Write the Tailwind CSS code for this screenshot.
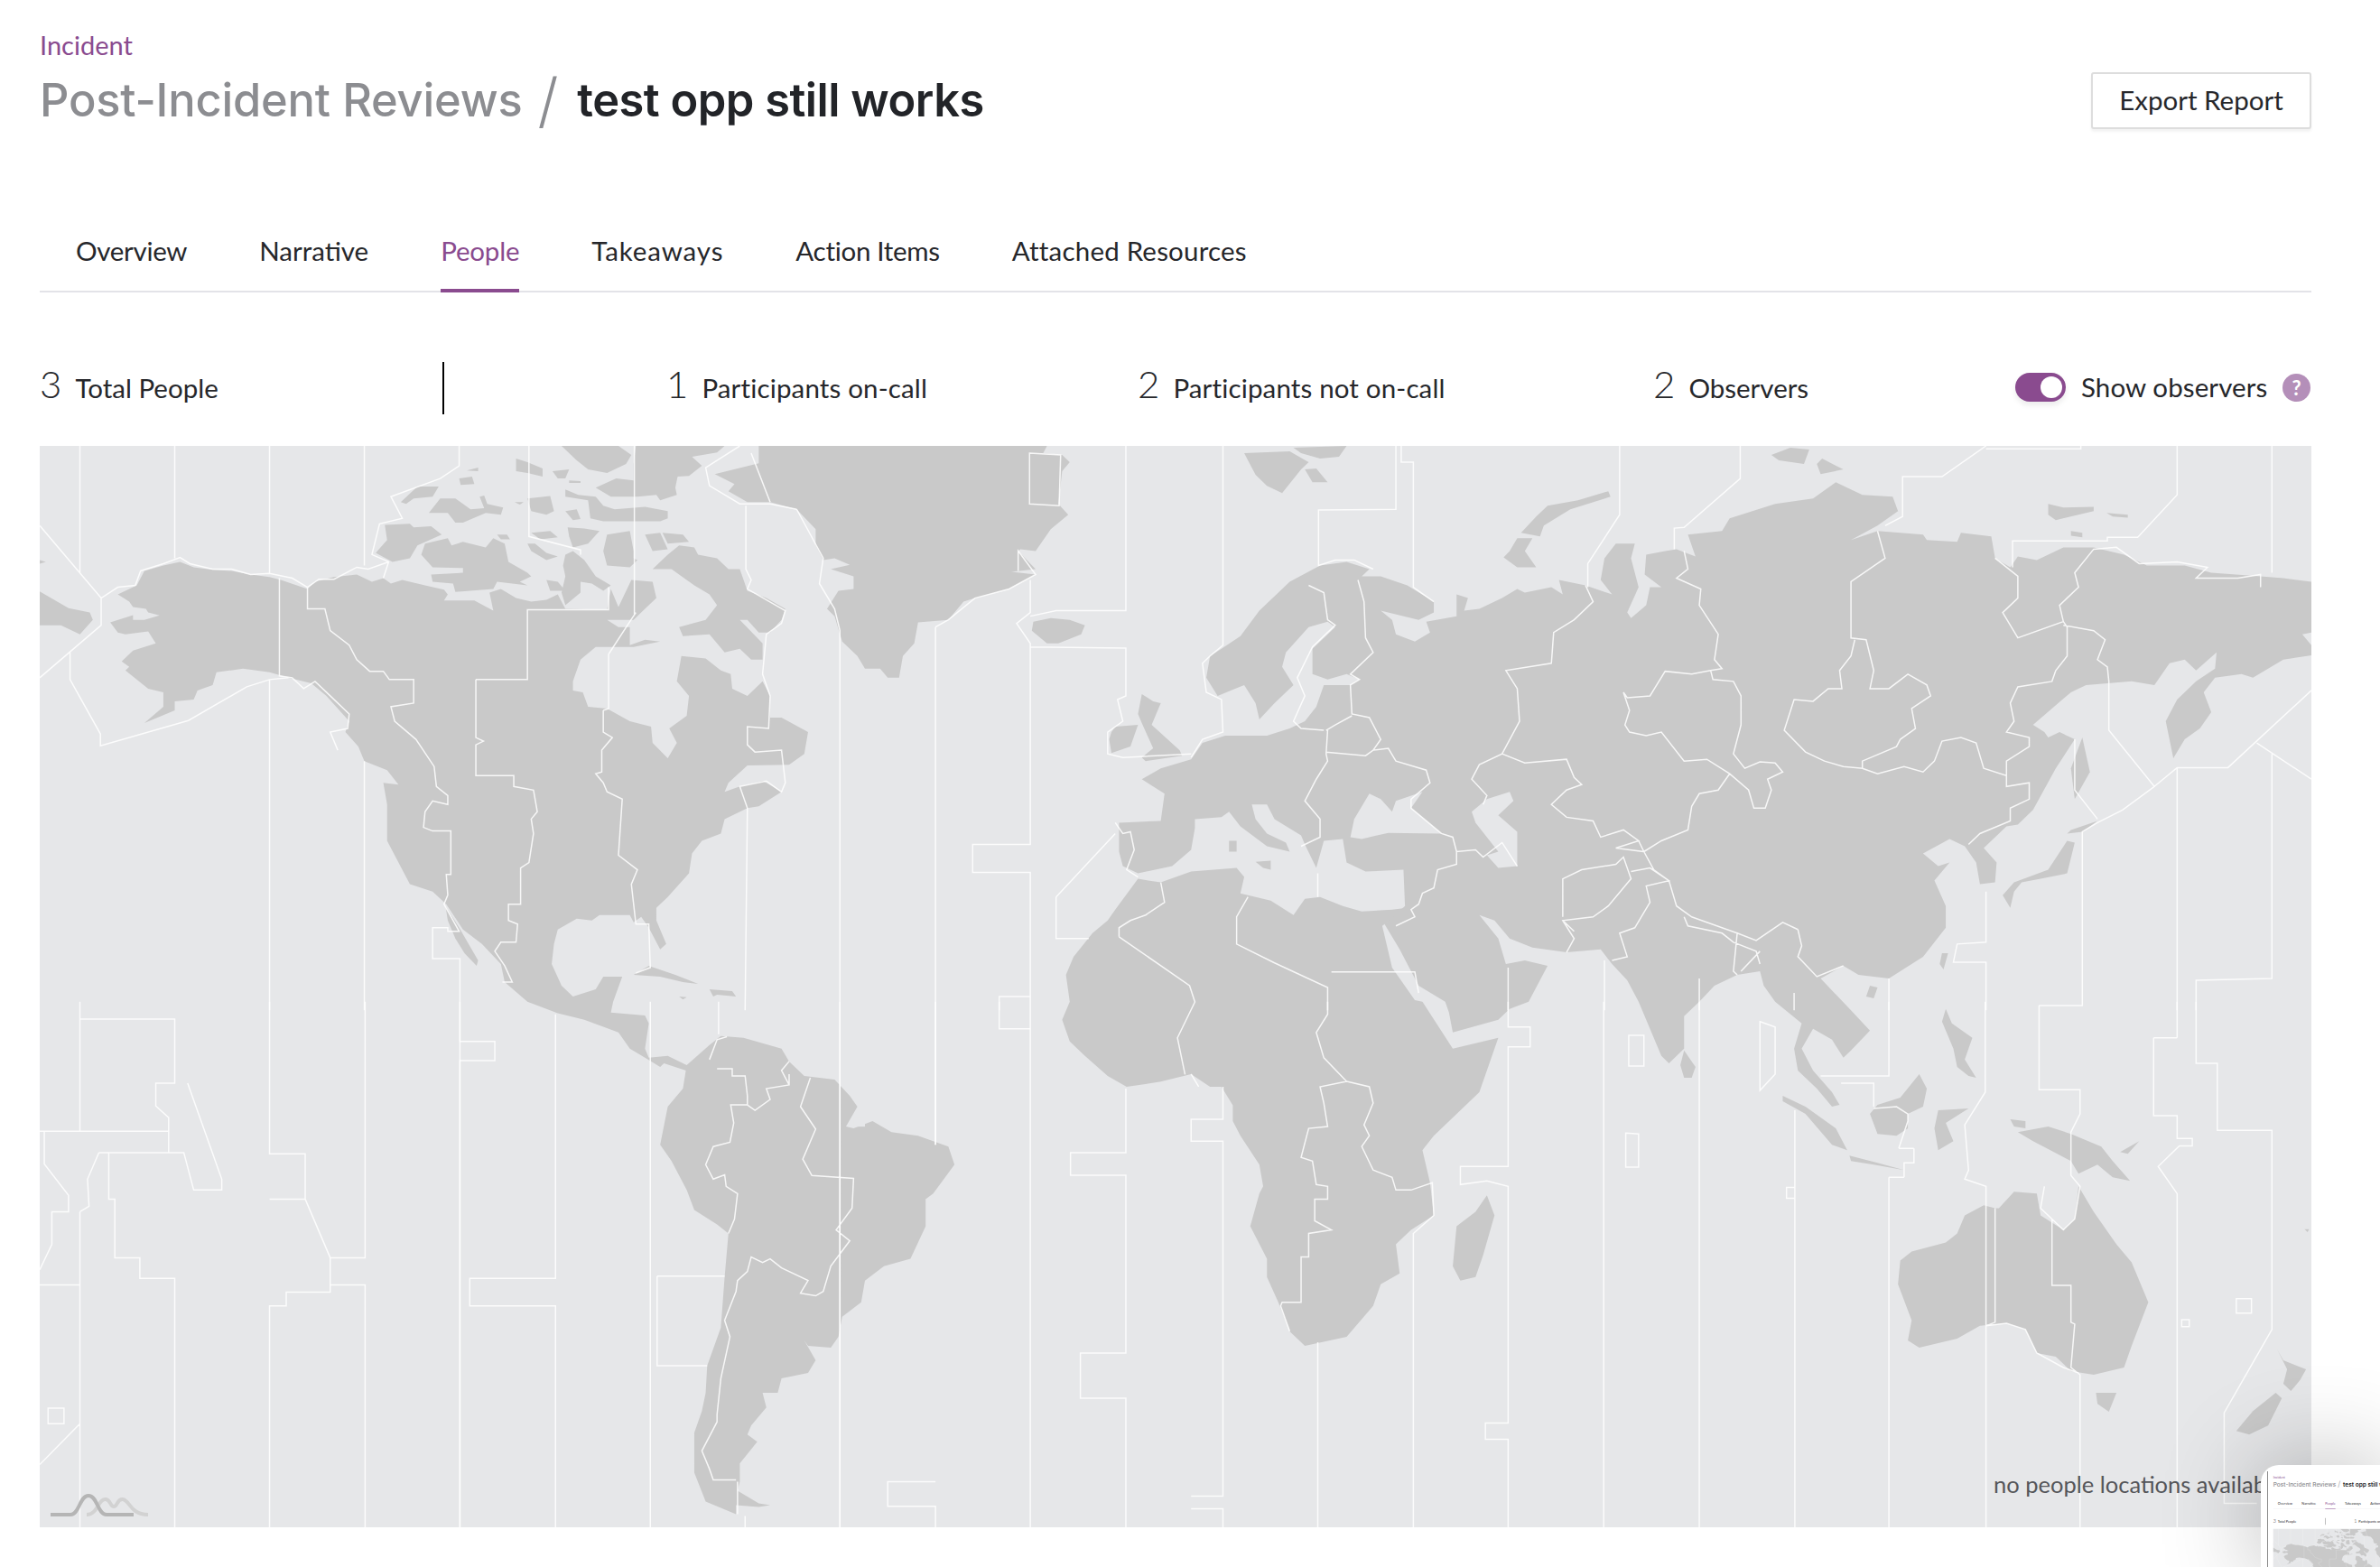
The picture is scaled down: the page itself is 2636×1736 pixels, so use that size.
<!DOCTYPE html>
<html lang="en">
<head>
    <meta charset="UTF-8">
    <script src="https://cdn.jsdelivr.net/npm/@tailwindcss/browser@4"></script>
    <title>Post-Incident Review</title>
</head>
<body class="bg-white overflow-hidden h-[1736px] relative font-['Lato',sans-serif] text-[#26272b]">
    <main class="pl-[44px] pr-[76px] w-[2636px]">
        <!-- header -->
        <header class="flex justify-between items-start h-[261px]">
            <div class="pt-[33px]">
                <div class="text-[29px] leading-[34px] text-[#8a4b8f]">Incident</div>
                <h1 class="flex items-center h-[78px] mt-[5px] text-[50.6px] font-['Inter',sans-serif] tracking-[-0.2px]">
                    <span class="text-[#8c8d91] font-medium">Post-Incident Reviews</span>
                    <span class="text-[#8c8d91] font-light text-[66px] ml-[17px] mr-[21px]">/</span>
                    <span class="font-semibold text-[#222428] tracking-[-0.5px]">test opp still works</span>
                </h1>
            </div>
            <button class="mt-[80px] w-[244px] h-[63px] bg-white border-2 border-[#dddddd] rounded-[3px] shadow-[0_3px_3px_rgba(0,0,0,.05)] text-[29.5px]">Export Report</button>
        </header>
        <!-- tabs -->
        <nav class="flex h-[63px] border-b-2 border-[#e3e3e8] text-[29.5px] leading-[34px]">
            <a class="ml-[40px] mr-[80px] tracking-[-0.3px]">Overview</a>
            <a class="mr-[80px]">Narrative</a>
            <a class="mr-[80px] h-[63px] w-[87px] text-[#8a4b8f] border-b-4 border-[#8a4b8f] tracking-[-0.2px]">People</a>
            <a class="mr-[80px] tracking-[0.9px]">Takeaways</a>
            <a class="mr-[80px] tracking-[-0.3px]">Action Items</a>
            <a class="tracking-[0.2px]">Attached Resources</a>
        </nav>
        <!-- stats -->
        <section class="flex items-center h-[170px] pt-[38px] text-[29.5px] whitespace-nowrap">
            <div class="w-[446px] flex items-baseline gap-[15px]"><span class="text-[42px] font-light leading-none">3</span>Total People</div>
            <div class="w-[2px] h-[58px] mt-[4px] bg-black"></div>
            <div class="w-[768px] pl-[246px] flex items-baseline gap-[15px]"><span class="text-[42px] font-light leading-none">1</span><span class="tracking-[0.15px]">Participants on-call</span></div>
            <div class="w-[571px] flex items-baseline gap-[15px]"><span class="text-[42px] font-light leading-none">2</span><span class="tracking-[0.15px]">Participants not on-call</span></div>
            <div class="w-[401px] flex items-baseline gap-[15px]"><span class="text-[42px] font-light leading-none">2</span>Observers</div>
            <div class="flex items-center mt-[2px]">
                <div class="w-[56px] h-[32px] rounded-full bg-[#8a4b8f] flex items-center justify-end pr-[4px] shadow-[0_4px_6px_rgba(0,0,0,.08)]">
                    <div class="w-[24px] h-[24px] rounded-full bg-white"></div>
                </div>
                <span class="ml-[17px] w-[223px] tracking-[0.1px]">Show observers</span>
                <span class="w-[31px] h-[31px] rounded-full bg-[#b48fb9] text-white text-[22px] font-bold flex items-center justify-center">?</span>
            </div>
        </section>
        <!-- map -->
        <section class="relative h-[1198px] bg-[#e6e7e9] overflow-hidden">
            <svg class="block w-full h-full" viewBox="52 10 2995 2985" preserveAspectRatio="none">
                <defs>
                    <g id="world">
                        <g fill="#c9c9c9">
                            <!-- north america -->
                            <path d="M180 395L190 355 215 340 237 330 255 345 280 352 305 355 330 365 355 372 370 380 405 405 415 385 440 372 470 365 490 385 505 375 515 390 530 380 560 395 585 407 590 420 585 437 625 437 650 465 645 415 660 405 680 430 700 440 720 435 735 420 745 460 800 462 805 405 815 455 832 380 860 385 865 430 845 470 835 490 800 490 815 510 830 510 830 560 850 545 870 550 835 565 785 565 765 600 755 660 755 685 768 690 775 730 800 735 830 770 858 785 860 830 880 872 892 830 882 790 905 755 908 700 892 660 898 590 930 597 950 630 963 640 965 680 985 700 1005 660 1015 700 1015 760 1030 760 1065 800 1060 860 1040 890 985 892 960 940 955 965 975 950 1005 935 1010 940 1030 965 1000 1005 985 1010 955 1040 950 1080 925 1100 912 1135 908 1190 880 1255 865 1285 865 1320 878 1385 870 1400 855 1340 845 1310 835 1325 830 1305 790 1305 780 1320 760 1315 735 1345 730 1385 727 1440 740 1500 755 1530 785 1510 795 1475 820 1475 808 1544 805 1574 850 1582 855 1604 850 1674 855 1699 880 1694 905 1719 925 1725 905 1735 875 1714 870 1724 850 1699 830 1674 815 1629 770 1594 735 1576 695 1544 665 1490 660 1440 635 1385 610 1345 588 1275 570 1240 540 1220 525 1160 510 1100 510 1000 505 940 525 945 510 905 480 880 472 840 455 800 460 770 430 700 410 665 380 650 355 635 320 625 285 635 280 670 260 685 255 710 230 715 230 740 190 775 215 730 215 690 195 680 165 630 170 620 160 605 175 575 205 555 195 522 165 530 155 525 145 497 175 477 175 490 190 490 210 478 195 470 192 460 175 455 170 440 155 420Z"/>
                            <path d="M587 1280L605 1340 630 1430 628 1445 612 1410 600 1370 590 1320Z"/>
                            <!-- arctic islands -->
                            <path d="M507 228L540 225 545 235 568 232 582 255 550 285 540 320 517 330 495 305 510 270Z"/>
                            <path d="M560 280L590 265 595 285 610 275 640 290 650 265 665 280 670 330 695 360 700 370 685 385 695 395 655 385 650 405 600 413 597 390 570 385 568 365 610 360 610 347 570 345 555 310Z"/>
                            <path d="M695 280L705 280 720 305 735 315 720 325 700 300Z"/>
                            <path d="M748 235L770 238 790 245 775 280 755 290 750 260Z"/>
                            <path d="M700 250L725 245 735 262 712 268Z"/>
                            <path d="M655 255L668 255 672 268 660 268Z"/>
                            <path d="M720 380L735 385 745 410 725 410Z"/>
                            <path d="M745 310L755 300 770 325 785 370 805 395 795 410 780 390 765 385 765 415 745 450 740 415 745 370 742 340Z"/>
                            <path d="M800 255L830 245 835 300 835 320 840 325 830 345 800 340 795 300Z"/>
                            <path d="M850 255L870 250 880 295 860 300Z"/>
                            <path d="M873 250L900 255 908 275 880 280Z"/>
                            <path d="M895 285L915 290 920 310 945 320 960 350 975 350 985 410 1010 430 1035 460 1030 490 1015 525 1000 525 985 490 975 490 1005 555 1005 600 990 600 975 570 955 580 935 530 900 535 895 510 930 490 945 450 935 420 915 395 885 350 860 350 880 310Z"/>
                            <path d="M740 10L815 10 832 35 825 60 800 85 775 75 760 50Z"/>
                            <path d="M838 10L955 10 945 28 912 40 925 65 908 93 893 95 890 125 892 145 870 160 865 145 840 150 805 150 785 125 812 100 835 105 835 60Z"/>
                            <path d="M680 45L695 55 715 72 715 95 695 85 680 80Z"/>
                            <path d="M728 80L750 75 745 100 735 100Z"/>
                            <path d="M750 105L765 107 765 112 750 112Z"/>
                            <path d="M745 130L762 145 785 150 795 175 810 185 850 178 880 190 880 210 870 218 795 218 778 210 775 160 745 150Z"/>
                            <path d="M605 100L622 95 625 115 607 118Z"/>
                            <path d="M615 78L630 70 630 80Z"/>
                            <path d="M550 122L578 122 570 150 545 155 535 170 528 165Z"/>
                            <path d="M580 155L600 155 620 185 638 182 632 150 638 147 642 170 663 180 660 200 640 195 610 222 600 222 590 195 565 195Z"/>
                            <path d="M695 155L725 148 730 190 720 200 700 190Z"/>
                            <path d="M745 190L760 185 765 212 755 215Z"/>
                            <path d="M678 165L690 165 685 172Z"/>
                            <path d="M52 325L60 330 52 335Z"/>
                            <path d="M52 412L90 458 118 470 122 490 105 530 80 505 52 505Z"/>
                            <!-- greenland, iceland, uk -->
                            <path d="M1000 10L1380 10 1375 30 1400 35 1410 55 1400 80 1395 170 1408 200 1385 240 1365 300 1345 295 1342 300 1365 350 1330 358 1310 352 1365 365 1330 405 1285 430 1270 440 1250 490 1210 497 1205 555 1190 590 1185 650 1170 650 1160 625 1140 625 1130 590 1110 550 1100 480 1090 460 1105 410 1125 405 1125 370 1095 350 1120 338 1100 320 1085 325 1075 285 1075 240 1050 185 1015 165 985 165 960 135 968 115 942 88 1000 58Z"/>
                            <path d="M1362 495L1385 485 1410 490 1430 505 1425 530 1395 555 1380 555 1360 520Z"/>
                            <path d="M1505 695L1520 715 1530 720 1518 780 1555 850 1558 865 1510 880 1505 870 1520 845 1505 775 1500 750Z"/>
                            <path d="M1470 785L1500 780 1490 840 1465 858 1462 820 1465 800Z"/>
                            <!-- cuba etc -->
                            <path d="M835 1470L855 1445 890 1470 920 1495 900 1490 870 1475Z"/>
                            <path d="M935 1510L965 1515 970 1530 945 1525 940 1530Z"/>
                            <path d="M895 1530L905 1532 900 1538Z"/>
                            <!-- africa -->
                            <path d="M1500 1205L1530 1215 1570 1185 1630 1175 1640 1200 1635 1245 1675 1265 1705 1305 1720 1260 1740 1255 1770 1280 1795 1295 1835 1290 1855 1285 1822 1335 1835 1450 1865 1540 1875 1544 1915 1674 1975 1644 1950 1794 1890 1914 1875 1954 1885 2044 1890 2134 1860 2174 1840 2214 1845 2294 1820 2324 1810 2384 1775 2469 1720 2494 1700 2454 1685 2374 1670 2304 1670 2254 1648 2164 1660 2074 1665 2054 1660 1994 1635 1914 1625 1874 1625 1830 1610 1779 1595 1779 1570 1744 1530 1765 1485 1779 1460 1749 1430 1694 1410 1654 1400 1594 1410 1544 1405 1470 1415 1420 1440 1355 1460 1320 1470 1290Z"/>
                        </g>
                        <!-- south america -->
                        <g transform="translate(0,1544)" fill="#c9c9c9">
                            <path d="M905 175L935 120 950 95 980 100 1030 130 1040 165 1060 205 1100 215 1120 260 1130 290 1115 345 1125 350 1150 330 1175 360 1210 370 1250 400 1258 450 1230 530 1220 545 1220 620 1200 710 1165 730 1140 770 1135 830 1110 870 1105 925 1095 955 1065 950 1060 935 1075 990 1065 1025 1030 1040 1025 1080 1005 1080 1010 1120 990 1170 985 1195 998 1215 975 1275 975 1325 972 1350 1000 1385 1015 1390 1000 1395 970 1390 970 1415 930 1380 915 1300 915 1190 925 1130 930 1080 932 1005 950 900 955 760 960 640 945 615 915 575 905 520 885 440 870 395 880 290 900 240Z"/>
                            <path fill="#e6e7e9" d="M1125 320L1140 320 1140 345 1125 345Z"/>
                        </g>
                        <!-- eurasia -->
                        <g transform="translate(1570,0)" fill="#c9c9c9">
                            <path d="M-95 1050L-40 1045-35 970-65 930-40 900 0 875 15 830 45 810 100 810 130 790 150 770 165 730 175 670 210 670 222 655 205 640 180 655 160 640 160 570 190 510 180 495 155 510 125 580 120 620 135 670 110 720 90 765 85 720 70 670 35 700 20 650 25 590 40 570 65 535 90 465 130 385 170 340 205 330 235 350 225 370 250 370 285 395 320 440 320 470 300 490 250 465 265 490 270 530 295 550 315 525 310 495 350 480 350 420 365 430 360 465 380 460 410 430 430 405 440 415 475 400 490 420 485 380 520 395 555 420 540 380 545 320 560 280 585 280 580 320 590 400 575 470 580 485 600 450 605 400 620 400 598 365 600 310 625 300 640 295 665 315 655 255 700 245 710 210 770 170 820 155 850 110 885 145 925 150 932 190 905 230 870 270 905 245 965 255 970 270 1010 275 1015 250 1055 260 1060 320 1080 345 1090 315 1115 325 1150 290 1190 290 1230 310 1260 340 1310 340 1345 360 1410 370 1440 375 1477 385 1477 525 1465 530 1477 560 1477 588 1440 600 1400 650 1385 640 1350 650 1335 690 1345 745 1330 790 1310 820 1295 872 1285 770 1300 710 1325 660 1350 625 1352 580 1325 630 1310 600 1290 610 1270 670 1240 660 1180 670 1160 690 1110 780 1125 800 1130 815 1145 800 1165 820 1140 900 1110 1015 1090 1055 1075 1060 1045 1120 1062 1160 1060 1215 1040 1220 1035 1160 1020 1115 1000 1095 965 1135 985 1170 1000 1160 980 1210 995 1280 995 1340 965 1420 920 1480 880 1470 860 1445 830 1480 870 1568 895 1624 870 1679 860 1699 845 1649 820 1619 805 1674 820 1734 845 1794 855 1829 845 1834 825 1784 800 1734 795 1674 805 1604 770 1544 755 1500 750 1460 720 1470 690 1500 670 1544 650 1584 650 1674 630 1714 620 1694 600 1594 590 1544 575 1485 555 1440 540 1400 495 1408 450 1395 420 1370 400 1320 380 1305 405 1370 415 1440 440 1430 470 1445 445 1544 420 1564 405 1594 345 1629 340 1574 335 1544 300 1500 275 1400 255 1330 282 1280 280 1180 230 1185 205 1160 200 1095 175 1100 165 1175 150 1110 145 1085 110 1040 100 1000 80 1000 85 1040 100 1080 125 1105 130 1130 100 1115 65 1060 50 1020 40 1035 5 1040 5 1065 0 1125-25 1170-70 1190-90 1170-95 1130Z"/>
                            <!-- black sea, caspian -->
                            <path fill="#e6e7e9" d="M210 1090L215 1040 235 970 250 985 265 1020 270 990 305 965 290 1010 330 1080 260 1078 225 1095Z"/>
                            <path fill="#e6e7e9" d="M390 985L420 965 425 990 405 1030 430 1075 430 1170 405 1175 390 1140 405 1130 375 1050 370 1020Z"/>
                            <!-- med islands -->
                            <path d="M50 1100L60 1100 60 1130 50 1130Z"/>
                            <path d="M85 1158L105 1155 105 1180 95 1175Z"/>
                            <!-- svalbard, zemlya etc -->
                            <path d="M70 30L130 25 155 55 145 75 120 140 100 120 85 90Z"/>
                            <path d="M135 15L205 10 195 40 170 45 145 30Z"/>
                            <path d="M150 75L165 72 180 110 160 110Z"/>
                            <path d="M550 135L553 150 500 185 465 230 460 260 435 250 455 205 470 175 510 160Z"/>
                            <path d="M430 265L450 265 440 300 455 345 430 345 412 318 420 300Z"/>
                            <path d="M765 35L790 15 815 20 808 60 775 50Z"/>
                            <path d="M825 60L832 45 860 75 830 88Z"/>
                            <path d="M1130 170L1150 180 1190 178 1190 190 1140 215 1130 200Z"/>
                            <path d="M1207 195L1235 200 1235 208 1215 205Z"/>
                            <path d="M1160 245L1175 250 1175 262 1160 258Z"/>
                            <!-- japan, sakhalin, taiwan, hainan -->
                            <path d="M1155 1100L1165 1105 1155 1190 1120 1205 1095 1215 1085 1240 1080 1285 1070 1250 1085 1215 1130 1180Z"/>
                            <path d="M1160 1070L1195 1045 1175 1075 1155 1080Z"/>
                            <path d="M1175 815L1185 910 1165 985 1160 900Z"/>
                            <path d="M990 1410L998 1410 992 1455 987 1440Z"/>
                            <path d="M895 1500L905 1505 900 1535 890 1530Z"/>
                            <!-- zone lines on eurasia -->
                            <path fill="none" stroke="#fff" vector-effect="non-scaling-stroke" stroke-width="1.5" stroke-opacity=".85" d="M42 10V560L25 590 15 610 20 690 40 710 42 800 15 820 0 870M270 10V185L168 187V340L190 325 215 325 240 350M277 10V55H293V400L320 440M565 10V200L523 335V400M724 10V100L650 235 637 237V295M1048 10L990 95H938V205L915 230M1048 18H1173V10M1300 10V145L1248 262H1208V272H1083V345M1425 10V360M650 300L655 350 640 375 672 405 670 450 695 530 690 600 700 625 685 630 660 640 625 632 605 700 575 705 570 690 578 740 572 780 578 800 600 810 620 800 650 880 680 875 710 915 735 960 742 1010H757L765 960 760 930 780 910 770 885 750 882 730 900 715 860 725 780 725 700 715 660 688 655 685 630M520 395L530 440 505 490 478 525 475 610 415 630 430 680 433 770 410 860 380 890 370 930 390 975 385 1000M410 860L440 885 495 875 505 925 515 945 495 960 475 1000 495 1035 530 1045 540 1090 570 1070 590 1100 560 1120 597 1130 590 1100M597 1130L610 1180 630 1210 640 1280 660 1310 720 1355 715 1460 720 1470M710 915L695 960 670 970 660 1005 655 1070 620 1100 597 1130M905 245L915 320 870 385V540L890 545 900 630 895 680H920L945 640 970 670 975 700 950 735 955 790 935 820 930 840 885 880V900L860 895 835 880 810 855 782 795 795 710 820 715 840 680H858L855 630 870 590 875 545M885 900L905 915 940 895 965 910 980 880 990 825 1015 815 1035 830 1045 900 1075 920V950L1105 940V985L1080 1010V1045L1040 1080 1025 1110M1075 920V880L1105 840V815L1075 800 1085 770 1080 720 1090 675 1135 660 1140 630 1155 590V510L1150 495 1090 540 1070 470 1090 430V370L1060 320M1150 495L1145 450 1170 400 1165 360 1190 295 1220 290 1250 335 1300 330 1340 345 1325 375H1380L1410 365V400M1150 505L1190 520 1205 545 1195 600 1208 620 1210 660V795L1270 950 1228 1015 1195 1050 1175 1075V1555H1118M1270 950L1300 898H1367L1477 685M1405 830L1477 930M1300 898V1568M1425 860V1480L1325 1485V1568M1165 820V960L1195 1040M180 795L178 860 180 880 165 930 150 990 170 1040V1090L145 1115M178 855L230 865 240 850 260 845 270 880 310 905 315 940 290 985V1010L330 1080 345 1090 350 1130 375 1125 385 1145 410 1105 430 1170M155 395L175 415 180 490 190 505 160 565 140 650 150 700 135 770 145 790 175 795M220 380L228 440 230 540 240 580 210 640 222 655 210 670 212 750 235 760 250 820 240 850M212 755L190 780 178 795M350 1130V1165L325 1180 320 1230 305 1245 300 1275 290 1290 295 1310 270 1335M75 1255L60 1310V1385L110 1437 180 1505V1568M185 1462H295L300 1520M167 1190V1255M1048 1240V1380L1010 1385 1005 1435H1048V1568M920 1480V1568M545 1430V1568M670 1480V1568M795 1520V1568M418 1450V1568M490 1310L490 1205 515 1180 560 1165 570 1145 580 1205 550 1280 530 1310 490 1320 505 1370 495 1408M490 1320L505 1350M580 1185L605 1175 630 1210 600 1225 605 1270 585 1340 565 1355 575 1420 555 1430M650 1310L655 1335 700 1355 715 1380 745 1405 750 1440M800 1345L805 1390 800 1420 825 1475 860 1445M720 1355L745 1375 780 1325 800 1345M750 1405L725 1460"/>
                        </g>
                        <!-- madagascar, oceania -->
                        <g transform="translate(1570,1544)" fill="#c9c9c9">
                            <path d="M390 535L400 590 385 700 375 760 355 770 345 730 350 620 375 580Z"/>
                            <path d="M650 135L665 180 660 210 650 210 645 175Z"/>
                            <path d="M1060 570L1045 562 1020 590 1010 640 995 665 950 690 935 715 932 780 950 880 945 935 960 955 1010 930 1040 895 1075 888 1100 905 1115 970 1140 980 1160 1020 1190 1030 1230 1010 1240 950 1262 830 1240 720 1220 670 1190 580 1170 510 1165 600 1150 630 1120 590 1115 530 1085 525 1065 570Z"/>
                            <path d="M1193 1080L1220 1080 1210 1132 1195 1110Z"/>
                            <path d="M1432 960L1440 990 1470 1015 1462 1045 1450 1075 1440 1055 1445 1015Z"/>
                            <path d="M1430 1080L1438 1095 1420 1170 1395 1195 1378 1185 1400 1130Z"/>
                            <path d="M1130 345L1160 365 1200 400 1215 440 1238 495 1215 485 1195 450 1170 475 1160 440 1110 385 1090 360Z"/>
                            <path d="M1080 325L1100 330 1100 350 1085 345Z"/>
                            <path d="M960 200L970 240 965 290 945 310 945 350 930 370 905 365 895 310 905 285 935 265Z"/>
                            <path d="M780 260L810 290 850 350 865 410 845 395 810 310 780 275Z"/>
                            <path d="M868 425L905 445 940 465 900 450 870 440Z"/>
                            <path d="M985 300L1025 295 995 335 1005 385 985 410 980 350Z"/>
                            <path d="M995 20L1003 60 1030 100 1020 160 1035 210 1025 205 1010 180 1005 130 990 55Z"/>
                            <path d="M1225 415L1250 385 1235 420Z"/>
                            <path d="M1468 628L1474 628 1472 636Z"/>
                            <path fill="none" stroke="#fff" vector-effect="non-scaling-stroke" stroke-width="1.5" stroke-opacity=".85" d="M0 200L10 235M180 0V35L165 85 175 155 205 220 170 235 175 280 180 345 155 350 145 430 160 440 165 505 180 510V545H163V605L185 630 155 640V705H145V830H120L118 840 130 910M205 220L235 235 240 280 228 340 235 370 225 400 240 465 265 485 270 520H290L318 500 320 590 293 640V1457M167 940V1457M42 235V325H0V385H42V1365H0M0 1400H42V1457M418 0V70H447V125H418V455H355V505L390 495 418 510V1163H388V1208H418V1457M544 0V1457M670 0V1457M577 93H597V178H577ZM573 363L590 365V457H573ZM785 513H796V543H785ZM796 300V1457M750 55L770 70V200L750 245ZM920 485V1457M920 0V205H830M857 225H900V290M940 485H920M953 405V445H940V485M933 405H953M933 405L945 330V310L930 290 900 295M1047 0V250L1020 340 1025 465 1020 490 1048 510V1457M1118 10V243H1172V310L1160 360V480L1172 510 1165 600 1150 630 1135 600V783H1160V885L1165 890 1160 1010 1172 1030V1457M1060 570V885L1048 895 1075 888 1100 905 1115 970 1150 1010 1170 1025M1125 510L1120 570 1135 600M1269 100H1300M1269 100V315H1300V378H1320V398H1303L1275 455 1300 530V1457M1300 0V100M1325 0V170H1353V355H1425V905L1362 1135V1385H1405M1378 820H1398V860H1378ZM1306 878H1316V897H1306Z"/>
                        </g>
                        <!-- zone lines, west -->
                        <path fill="none" stroke="#fff" vector-effect="non-scaling-stroke" stroke-width="1.5" stroke-opacity=".85" d="M105 10V360M230 10V320M355 10V360M480 10V340M605 10V65L580 100 515 150 530 210 500 225 490 310 512 330 505 375M52 230L133 430V505L52 650M133 430L155 400 178 395 185 355 215 335 237 318 250 335 280 350H305L330 365 355 362 385 375 405 400 420 378H440L470 345 485 350 512 330M92 580V655L132 805V838L248 768 325 675 355 655 380 650M368 375V645L385 650 400 680 415 660 430 690 460 750 458 790 435 800 445 850M405 400V460H428L435 520 460 560 470 600 487 632H505L513 655H545V720L515 730 520 770 548 820 572 895 575 950 590 975V1000L570 990 560 1020 558 1063 570 1073H594V1193H588L590 1250 585 1275 605 1350H590V1340H570V1425H606V3001M627 655H695V462H802V400M627 655V815L637 825 627 835V920H677V950L703 960 708 1020 700 1040 703 1080 697 1160 686 1175V1275H670V1320L682 1330 680 1380H660L652 1405 665 1445 675 1490H662M795 740V800L807 815 793 850V910L785 915 795 940 800 965 820 985 815 1140 840 1180 832 1220 838 1330H855L857 1450 838 1465M802 585L830 495 838 470M802 585V735L795 740M697 10V260L765 297V310M836 10V475M983 175V350L990 380 985 405 1035 465 1030 500 1010 530 1005 640 1015 700 1013 790 985 785V835L995 855 1030 850 1035 940 1030 965 1010 935 975 950 985 1010 982 1568M975 10L930 70 935 120 975 170H1015L1050 185M990 30L1015 165M1050 185L1085 320 1080 390 1100 460 1107 520V3001M1233 510V1939M1233 510L1250 490 1285 430 1330 405 1365 365 1342 300V355M1358 380V470L1340 500 1358 555V1110H1282V1187H1358V3001M1357 30L1398 35 1396 175 1357 170ZM1484 10V465H1392L1358 480M1358 565L1484 568V700L1473 710 1480 770 1460 800V860L1480 870 1570 860M1392 1255V1370H1435M1392 1255L1470 1080M1317 1568V1530H1358M1475 1365L1568 1500 1575 1545 1552 1644 1562 1745M1530 1215L1535 1270 1510 1305 1490 1320 1475 1340V1365M480 880V1568M1470 1050L1480 1080 1490 1075 1495 1125 1485 1180 1500 1200M355 655V1568"/>
                        <g transform="translate(0,1544)">
                            <path fill="none" stroke="#fff" vector-effect="non-scaling-stroke" stroke-width="1.5" stroke-opacity=".85" d="M52 358H222M105 0V357M105 48H230V225H205V288L222 320V415M58 358V448L90 535V580H68V670L52 740M52 782H105M105 580V1457M105 1165L52 1278M130 417H242L255 520H292V490L247 225M130 417L115 490 117 565 105 580M143 417V545H151V707H184V764H230V1457M355 0V420H402V545H355M402 545L435 707H481V0M435 707V802H377V840H355V1457M435 782H481V1457M63 1122H84V1165H63ZM606 0V110H652V163H606V1457M732 35V764H619V840H732V1457M857 0V1457M947 0V90M866 758H955M866 758V1005H932M982 1420V1457M1107 0V1457M1233 0V395M1233 1325H1170V1393H1233V1457M1317 0V75H1358M1484 240V417H1411V479H1484V970H1424V1095H1484V1457M935 160L945 105 958 97M945 185H965V205H982L985 260V285H963L967 335 962 388 940 400 930 450 940 490 955 478 957 510 972 530 968 600 960 640M1040 200V230L1010 240 1015 270 995 300 985 285M1040 165L1030 190 1040 230M1068 210L1055 290 1075 352 1058 435 1070 480 1125 488 1123 570 1102 630 1120 660 1095 730 1085 800 1075 812 1055 805 1065 770 1030 735 1015 710 1005 720 990 705 985 745 972 770 970 800 955 880 962 925 950 1040 945 1140V1160L925 1240 935 1290 940 1320H970M972 1325V1415"/>
                        </g>
                    </g>
                </defs>
                <use href="#world"/>
            </svg>
            <!-- logo -->
            <svg class="absolute left-[12px] bottom-[10px]" width="110" height="28" viewBox="0 0 110 28" fill="none" stroke-width="4">
                <path stroke="#d2d2d2" d="M40 24C52 24 52 8 60 7 66 6 66 15 70 15 74 15 74 6 80 7 88 8 88 24 108 24"/>
                <path stroke="#b5b5b5" d="M0 24H22C32 24 32 3 42 3 52 3 52 24 62 24H92"/>
            </svg>
            <p class="absolute left-[2164px] top-[1133px] whitespace-nowrap text-[25.5px] leading-[34px] text-[#55565a]">no people locations available</p>
        </section>
    </main>
    <!-- recording thumbnail in the corner -->
    <aside class="absolute left-[2504px] top-[1623px] w-[132px] h-[113px] bg-white rounded-tl-[20px] shadow-[0_0_110px_rgba(0,0,0,.3)] overflow-hidden">
        <div class="absolute left-[7px] top-[7px] w-[200px] h-[200px] border-l-2 border-t-2 border-[#8a8a8a]"></div>
        <div class="absolute left-[8px] top-[7px] w-[2636px] h-[1736px] origin-top-left scale-[.129] bg-white">
            <div class="pl-[44px] pr-[76px]">
                <div class="h-[261px] pt-[33px]">
                    <div class="text-[29px] leading-[34px] text-[#8a4b8f]">Incident</div>
                    <div class="flex items-center h-[78px] mt-[5px] text-[50.6px] font-['Inter',sans-serif]">
                        <span class="text-[#8c8d91] font-medium">Post-Incident Reviews</span>
                        <span class="text-[#8c8d91] font-light text-[66px] ml-[17px] mr-[21px]">/</span>
                        <span class="font-semibold text-[#222428]">test opp still works</span>
                    </div>
                </div>
                <div class="flex h-[63px] border-b-2 border-[#e3e3e8] text-[29.5px] leading-[34px]">
                    <span class="ml-[40px] mr-[80px]">Overview</span>
                    <span class="mr-[80px]">Narrative</span>
                    <span class="mr-[80px] h-[63px] text-[#8a4b8f] border-b-4 border-[#8a4b8f]">People</span>
                    <span class="mr-[80px]">Takeaways</span>
                    <span class="mr-[80px]">Action Items</span>
                </div>
                <div class="flex items-center h-[170px] pt-[38px] text-[29.5px] whitespace-nowrap">
                    <div class="w-[446px] flex items-baseline gap-[15px]"><span class="text-[42px] font-light leading-none">3</span>Total People</div>
                    <div class="w-[2px] h-[58px] mt-[4px] bg-black"></div>
                    <div class="pl-[246px] flex items-baseline gap-[15px]"><span class="text-[42px] font-light leading-none">1</span>Participants on-call</div>
                </div>
                <svg class="block w-[2516px] h-[1198px] bg-[#e6e7e9]" viewBox="52 10 2995 2985" preserveAspectRatio="none"><use href="#world"/></svg>
            </div>
        </div>
    </aside>
</body>
</html>
